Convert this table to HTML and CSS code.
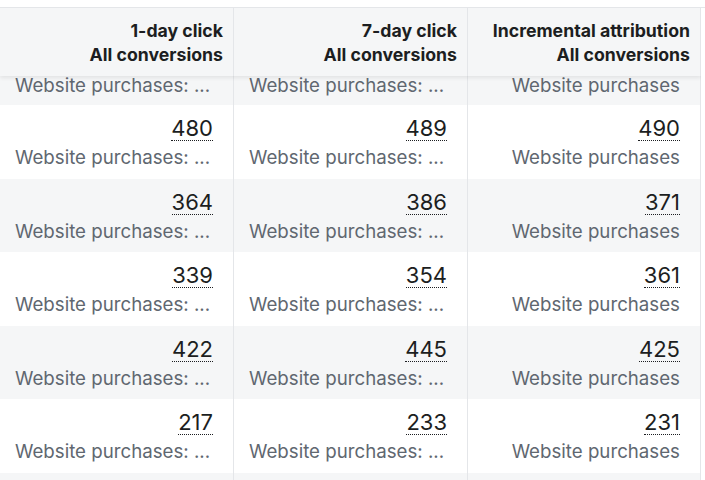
FILE: index.html
```html
<!DOCTYPE html>
<html>
<head>
<meta charset="utf-8">
<link rel="stylesheet" href="styles.css">
</head>
<body>
<div class="topstrip"></div>
<div class="table">
  <div class="head">
    <div class="hcell"><div>1-day click</div><div>All conversions</div></div>
    <div class="hcell"><div>7-day click</div><div>All conversions</div></div>
    <div class="hcell"><div>Incremental attribution</div><div>All conversions</div></div>
  </div>
  <div class="row partial gray">
    <div class="cell"><span class="label trunc">Website purchases: ...</span></div>
    <div class="cell"><span class="label trunc">Website purchases: ...</span></div>
    <div class="cell right"><span class="label">Website purchases</span></div>
  </div>
  <div class="row">
    <div class="cell"><span class="num">480</span><span class="label trunc">Website purchases: ...</span></div>
    <div class="cell"><span class="num">489</span><span class="label trunc">Website purchases: ...</span></div>
    <div class="cell right"><span class="num">490</span><span class="label">Website purchases</span></div>
  </div>
  <div class="row gray">
    <div class="cell"><span class="num">364</span><span class="label trunc">Website purchases: ...</span></div>
    <div class="cell"><span class="num">386</span><span class="label trunc">Website purchases: ...</span></div>
    <div class="cell right"><span class="num">371</span><span class="label">Website purchases</span></div>
  </div>
  <div class="row">
    <div class="cell"><span class="num">339</span><span class="label trunc">Website purchases: ...</span></div>
    <div class="cell"><span class="num">354</span><span class="label trunc">Website purchases: ...</span></div>
    <div class="cell right"><span class="num">361</span><span class="label">Website purchases</span></div>
  </div>
  <div class="row gray">
    <div class="cell"><span class="num">422</span><span class="label trunc">Website purchases: ...</span></div>
    <div class="cell"><span class="num">445</span><span class="label trunc">Website purchases: ...</span></div>
    <div class="cell right"><span class="num">425</span><span class="label">Website purchases</span></div>
  </div>
  <div class="row">
    <div class="cell"><span class="num">217</span><span class="label trunc">Website purchases: ...</span></div>
    <div class="cell"><span class="num">233</span><span class="label trunc">Website purchases: ...</span></div>
    <div class="cell right"><span class="num">231</span><span class="label">Website purchases</span></div>
  </div>
  <div class="row gray last">
    <div class="cell"></div>
    <div class="cell"></div>
    <div class="cell right"></div>
  </div>
</div>
</body>
</html>
```

FILE: styles.css
```css
html, body {
  margin: 0;
  padding: 0;
  background: #ffffff;
  overflow: hidden;
}
body {
  font-family: Inter, Roboto, "Liberation Sans", sans-serif;
  color: #1c1e21;
  width: 705px;
  height: 480px;
}
.topstrip {
  height: 7px;
  border-bottom: 1px solid #e4e6e9;
}
.table {
  width: 701px;
  height: 472px;
  overflow: hidden;
  position: relative;
}
.head {
  display: grid;
  grid-template-columns: 234px 234px 233px;
  height: 68px;
  background: #f5f6f7;
  position: relative;
  z-index: 2;
  box-shadow: 0 2px 4px rgba(0, 0, 0, 0.08);
}
.hcell {
  border-right: 1px solid #e4e6e9;
  display: flex;
  flex-direction: column;
  align-items: flex-end;
  justify-content: center;
  padding-right: 10px;
  padding-top: 1px;
  font-weight: 700;
  font-size: 17.7px;
  line-height: 24px;
  color: #1c1e21;
}
.row {
  display: grid;
  grid-template-columns: 234px 234px 233px;
  height: 73.6px;
  background: #ffffff;
}
.row.gray {
  background: #f5f6f7;
}
.row.partial {
  height: 29px;
}
.cell {
  border-right: 1px solid #e4e6e9;
  display: flex;
  flex-direction: column;
  align-items: stretch;
  padding: 11px 20px 8px 15px;
  overflow: hidden;
}
.partial .cell {
  justify-content: flex-end;
  padding-top: 0;
  padding-bottom: 9px;
  overflow: visible;
}
.partial .label {
  line-height: 20px;
}
.num {
  align-self: flex-end;
  font-size: 22px;
  line-height: 24px;
  color: #1c1e21;
  border-bottom: 1px dotted #1c1e21;
  margin-bottom: 5px;
}
.label {
  font-size: 18.7px;
  line-height: 24px;
  color: #606770;
  white-space: nowrap;
}
.right .label {
  text-align: right;
}
```
